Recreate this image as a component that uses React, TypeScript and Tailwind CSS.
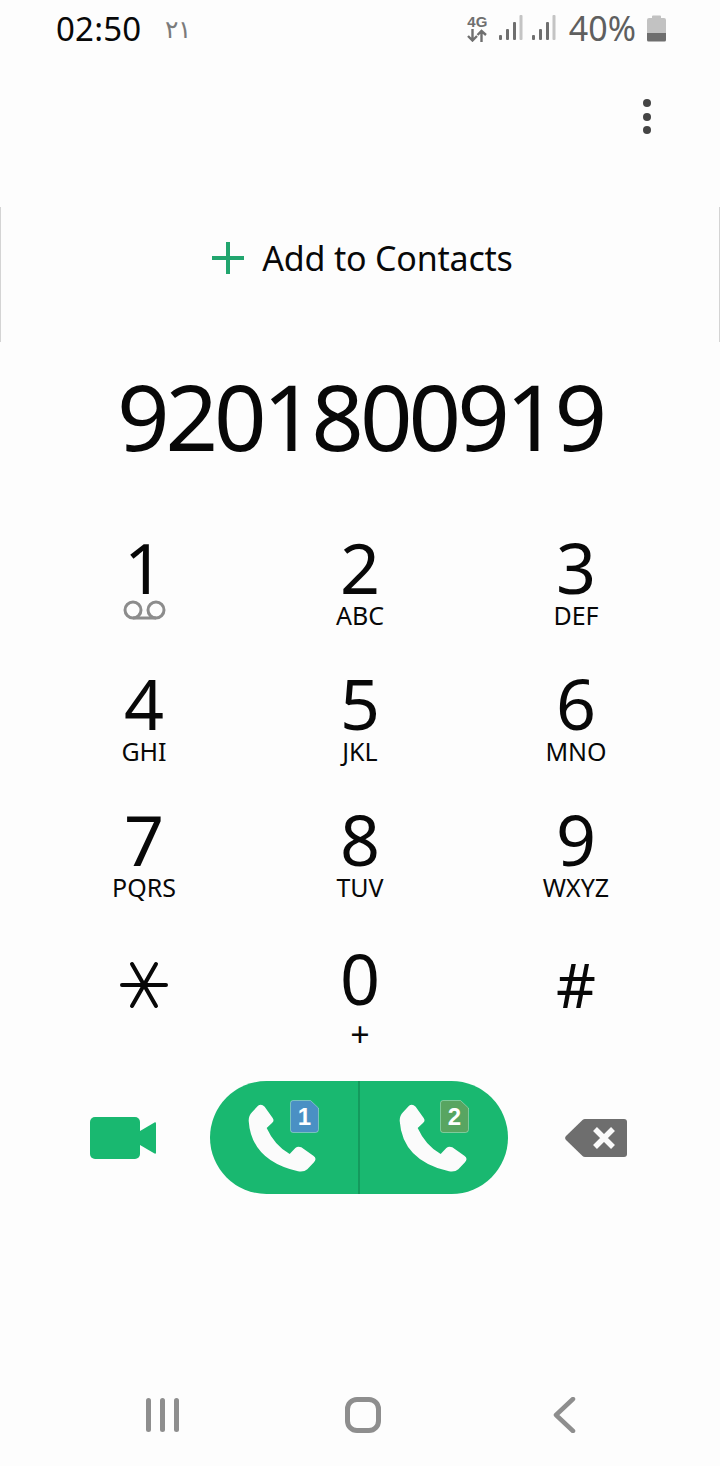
import type { ReactNode } from "react";

type Key = {
	digit: string;
	sub?: string;
};

const keys: Key[] = [
	{ digit: "1" },
	{ digit: "2", sub: "ABC" },
	{ digit: "3", sub: "DEF" },
	{ digit: "4", sub: "GHI" },
	{ digit: "5", sub: "JKL" },
	{ digit: "6", sub: "MNO" },
	{ digit: "7", sub: "PQRS" },
	{ digit: "8", sub: "TUV" },
	{ digit: "9", sub: "WXYZ" },
];

const PHONE_PATH =
	"M30 5Q40-2 50 8L74 42Q80 50 72 57L56 72Q80 125 125 150L142 132Q150 125 160 130L196 155Q208 163 198 175L178 196Q168 205 150 202Q10 170 2 50Q2 35 12 25Z";

const SignalIcon = () => (
	<svg width="24" height="26" viewBox="0 0 24 26">
		<rect x="0" y="20" width="3" height="5" rx="1" fill="#6f6f6f" />
		<rect x="7" y="14" width="3" height="11" rx="1" fill="#6f6f6f" />
		<rect x="14" y="7" width="3" height="18" rx="1" fill="#6f6f6f" />
		<rect x="20.500" y="0" width="3" height="25" rx="1" fill="#c4c4c4" />
	</svg>
);

const DataIcon = () => (
	<div className="flex w-[21px] flex-col items-center text-[#6f6f6f]">
		<span className="font-['Liberation_Sans',sans-serif] text-[15px] leading-[15px] font-bold">
			4G
		</span>
		<svg width="20" height="13" viewBox="0 0 20 13" fill="none" stroke="currentColor" strokeWidth="2.400">
			<path d="M5.500 0v11M1 7l4.500 4.500L10 7" />
			<path d="M14.500 13V2M10.500 6l4-4 4.500 4" />
		</svg>
	</div>
);

const BatteryIcon = () => (
	<svg width="19" height="28" viewBox="0 0 19 28">
		<path d="M5 2.500a1 1 0 0 1 1-1h7a1 1 0 0 1 1 1V4h3a2 2 0 0 1 2 2v13H0V6a2 2 0 0 1 2-2h3z" fill="#c2c2c2" />
		<path d="M0 19h19v7a1.500 1.500 0 0 1-1.500 1.500h-16A1.500 1.500 0 0 1 0 26z" fill="#6e6e6e" />
	</svg>
);

const CallHalf = ({ children, offset }: { children: ReactNode; offset: string }) => (
	<div className="relative h-full w-[148px]">
		<svg
			width="68"
			height="68"
			viewBox="0 0 204 204"
			className={`absolute top-[23px] ${offset}`}
		>
			<path d={PHONE_PATH} fill="#fbfbfb" />
		</svg>
		{children}
	</div>
);

const SimBadge = ({ sim, color, left }: { sim: string; color: string; left: string }) => (
	<svg width="29" height="33" viewBox="0 0 29 33" className={`absolute top-[19px] ${left}`}>
		<path
			d="M3 .5h17.500L28.500 8v21.500a3 3 0 0 1-3 3H3a2.500 2.500 0 0 1-2.500-2.500V3A2.500 2.500 0 0 1 3 .5z"
			fill={color}
			stroke="#ffffff"
			strokeOpacity="0.35"
		/>
		<text
			x="14.500"
			y="25"
			textAnchor="middle"
			fill="#ffffff"
			fontSize="24"
			fontWeight="700"
			fontFamily="Liberation Sans, sans-serif"
		>
			{sim}
		</text>
	</svg>
);

export default function App() {
	return (
		<div className="flex h-[1466px] w-[720px] flex-col overflow-hidden bg-[#fdfdfd] font-['Noto_Sans',sans-serif] text-[#080808]">
			{/* status bar */}
			<div className="flex h-[56px] items-center justify-between pr-[54px] pl-[56px]">
				<div className="flex items-center gap-[24px]">
					<span className="text-[33px] leading-none tracking-[0.2px]">02:50</span>
					<span className="text-[25px] leading-none text-[#7b7b7b]">٢١</span>
				</div>
				<div className="flex items-center">
					<DataIcon />
					<div className="ml-[11px] flex gap-[9px]">
						<SignalIcon />
						<SignalIcon />
					</div>
					<span className="ml-[13px] text-[34px] leading-none text-[#5f5f5f]">40%</span>
					<div className="ml-[11px]">
						<BatteryIcon />
					</div>
				</div>
			</div>

			{/* menu */}
			<div className="flex h-[151px] justify-end pt-[43px] pr-[71px]">
				<div className="flex h-[35px] w-[5px] flex-col items-center justify-between">
					<span className="size-[8px] shrink-0 rounded-full bg-[#444444]" />
					<span className="size-[8px] shrink-0 rounded-full bg-[#444444]" />
					<span className="size-[8px] shrink-0 rounded-full bg-[#444444]" />
				</div>
			</div>

			{/* add to contacts */}
			<div className="flex h-[135px] items-center justify-center gap-[17px] border-x border-[#d4d4d4] pb-[34px] pl-[4px]">
				<svg width="34" height="34" viewBox="0 0 34 34" stroke="#21a56e" strokeWidth="4">
					<path d="M17 1v32M1 17h32" />
				</svg>
				<span className="text-[34px] leading-none tracking-[-0.2px]">Add to Contacts</span>
			</div>

			{/* number */}
			<div className="flex h-[175px] items-center justify-center pb-[27px] text-[92px] leading-none tracking-[-4px]">
				9201800919
			</div>

			{/* keypad */}
			<div className="grid grid-cols-3 px-[36px]">
				{keys.map((key) => (
					<div key={key.digit} className="flex h-[136px] flex-col items-center pt-[16px]">
						<span className="text-[70px] leading-[68px]">{key.digit}</span>
						{key.sub ? (
							<span className="text-[25px] leading-[28px]">{key.sub}</span>
						) : (
							<svg width="43" height="20" viewBox="0 0 43 20" fill="none" stroke="#8c8c8c" strokeWidth="3" className="-mt-px">
								<circle cx="10" cy="10" r="8" />
								<circle cx="33" cy="10" r="8" />
								<path d="M10 18h23" />
							</svg>
						)}
					</div>
				))}
				<div className="flex h-[136px] justify-center pt-[36px]">
					<svg width="48" height="48" viewBox="0 0 48 48" stroke="#080808" strokeWidth="4" strokeLinecap="round">
						<path d="M2 24h44M12 3l24 42M36 3L12 45" />
					</svg>
				</div>
				<div className="flex h-[136px] flex-col items-center pt-[19px]">
					<span className="text-[70px] leading-[68px]">0</span>
					<span className="mt-[8px] text-[34px] leading-[28px]">+</span>
				</div>
				<div className="flex h-[136px] justify-center pt-[21px]">
					<span className="text-[62px] leading-[76px]">#</span>
				</div>
			</div>

			{/* call row */}
			<div className="mt-[20px] flex h-[113px] items-center">
				<div className="ml-[90px] flex w-[120px]">
					<svg width="66" height="42" viewBox="0 0 66 42" fill="#19b870">
						<rect x="0" y="0" width="50" height="42" rx="5" />
						<path d="M50 14 64.500 5.500c.8-.4 1.500 0 1.500.8v29.400c0 .8-.7 1.200-1.500.8L50 28z" />
					</svg>
				</div>
				<div className="flex h-[113px] w-[298px] overflow-hidden rounded-full bg-[#19b870]">
					<CallHalf offset="left-[38px]">
						<SimBadge sim="1" color="#4a90c4" left="left-[80px]" />
					</CallHalf>
					<div className="h-full w-[2px] bg-[#149a5d]" />
					<CallHalf offset="left-[39px]">
						<SimBadge sim="2" color="#58a561" left="left-[80px]" />
					</CallHalf>
				</div>
				<div className="ml-[57px]">
					<svg width="62" height="40" viewBox="0 0 62 40">
						<path d="M20 1h39a3 3 0 0 1 3 3v32a3 3 0 0 1-3 3H20a4 4 0 0 1-2.500-1L1 22a3 3 0 0 1 0-4L17.500 2a4 4 0 0 1 2.500-1z" fill="#6e6e6e" />
						<path d="M30 11l18 18M48 11 30 29" stroke="#fafafa" strokeWidth="5.500" />
					</svg>
				</div>
			</div>

			{/* nav bar */}
			<div className="mt-[203px] flex h-[36px] items-center pl-[146px]">
				<div className="flex w-[199px] gap-[9px]">
					<span className="h-[34px] w-[5px] rounded-full bg-[#8e8e8e]" />
					<span className="h-[34px] w-[5px] rounded-full bg-[#8e8e8e]" />
					<span className="h-[34px] w-[5px] rounded-full bg-[#8e8e8e]" />
				</div>
				<div className="h-[36px] w-[36px] rounded-[12px] border-[5px] border-[#8e8e8e]" />
				<svg width="24" height="36" viewBox="0 0 24 36" fill="none" stroke="#8e8e8e" strokeWidth="4.500" strokeLinecap="round" strokeLinejoin="round" className="ml-[172px]">
					<path d="M20 2 3 18l17 16" />
				</svg>
			</div>
		</div>
	);
}
